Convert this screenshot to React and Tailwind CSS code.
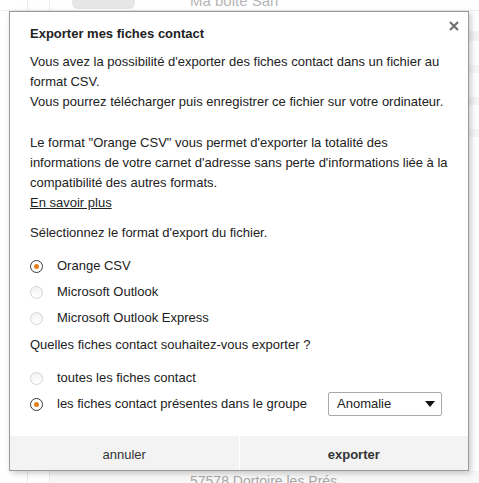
import React from 'react';

const Radio = ({ checked }) =>
    checked ? (
        <span className="w-[13px] h-[13px] rounded-full border-[1.5px] border-[#3a3a3a] bg-white flex items-center justify-center shrink-0">
            <span className="w-[5px] h-[5px] rounded-full bg-[#e67e1c]" />
        </span>
    ) : (
        <span className="w-[13px] h-[13px] rounded-full border border-[#d4d4d4] bg-gradient-to-b from-[#f2f2f2] to-white shrink-0" />
    );

const RadioRow = ({ checked, label, children }) => (
    <div className="flex items-center h-[26px]">
        <Radio checked={checked} />
        <span className="ml-[14px]">{label}</span>
        {children}
    </div>
);

export default function App() {
    return (
        <div className="relative w-[479px] h-[483px] overflow-hidden bg-white text-[13px] text-[#222]" style={{ fontFamily: '"Liberation Sans", Arial, sans-serif' }}>
            {/* page behind the dialog */}
            <div className="flex flex-col h-full">
                <div className="flex h-[11px] border-b border-[#ececec]">
                    <div className="w-[28px] border-r border-[#eee]" />
                    <div className="w-[22px] border-r border-[#eee]" />
                    <div className="ml-[22px] w-[63px] h-[9px] rounded-b-[6px] bg-[#e6e6e6]" />
                    <div className="ml-[55px] -mt-[8px] text-[15px] leading-[18px] text-[#b5b5b5]">Ma boite Sarl</div>
                </div>
                <div className="flex-1 flex flex-col items-end gap-[24px] pt-[20px]">
                    <div className="w-[12px] h-[10px] bg-[#f4f4f4]" />
                    <div className="w-[12px] h-[8px] bg-[#f6f6f6]" />
                    <div className="w-[12px] h-[8px] bg-[#f4f4f4]" />
                    <div className="w-[12px] h-[8px] bg-[#f6f6f6]" />
                </div>
                <div className="flex h-[12px]">
                    <div className="w-[28px] border-r border-[#e8e8e8]" />
                    <div className="w-[22px] border-r border-[#e8e8e8]" />
                    <div className="flex-1 bg-[#f7f7f7] pl-[140px] pt-[1px] text-[14px] leading-[18px] text-[#a8a8a8]">57578 Dortoire les Prés</div>
                </div>
            </div>

            {/* dialog */}
            <div className="absolute left-[9px] top-[11px] w-[460px] h-[460px] bg-white border border-[#9a9a9a] shadow-[2px_2px_6px_rgba(0,0,0,0.22)] flex flex-col">
                <button className="absolute right-[8px] top-[8px] w-[12px] h-[12px] flex items-center justify-center">
                    <svg width="10" height="10" viewBox="0 0 10 10">
                        <path d="M1 1L9 9M9 1L1 9" stroke="#707070" strokeWidth="2.2" />
                    </svg>
                </button>
                <div className="flex-1 px-[20px] pt-[12px] leading-[20px]">
                    <h2 className="font-bold text-[13px] leading-[20px]">Exporter mes fiches contact</h2>
                    <p className="mt-[8px]">
                        Vous avez la possibilité d'exporter des fiches contact dans un fichier au format CSV.
                        <br />
                        Vous pourrez télécharger puis enregistrer ce fichier sur votre ordinateur.
                    </p>
                    <p className="mt-[21px]">
                        Le format "Orange CSV" vous permet d'exporter la totalité des informations de votre carnet d'adresse sans perte d'informations liée à la compatibilité des autres formats.
                        <br />
                        <a className="underline">En savoir plus</a>
                    </p>
                    <p className="mt-[10px]">Sélectionnez le format d'export du fichier.</p>
                    <div className="mt-[10px]">
                        <RadioRow checked label="Orange CSV" />
                        <RadioRow label="Microsoft Outlook" />
                        <RadioRow label="Microsoft Outlook Express" />
                    </div>
                    <p className="mt-[4px]">Quelles fiches contact souhaitez-vous exporter ?</p>
                    <div className="mt-[10px]">
                        <RadioRow label="toutes les fiches contact" />
                        <RadioRow checked label="les fiches contact présentes dans le groupe">
                            <div className="ml-auto mr-[6px] w-[114px] h-[24px] border border-[#a9a9a9] rounded-[2px] flex items-center justify-between pl-[8px] pr-[6px] bg-white">
                                <span>Anomalie</span>
                                <svg width="10" height="6" viewBox="0 0 10 6">
                                    <path d="M0 0H10L5 6Z" fill="#111" />
                                </svg>
                            </div>
                        </RadioRow>
                    </div>
                </div>
                <div className="h-[34px] flex bg-[#f3f3f3]">
                    <button className="flex-1 pt-[3px] text-[#333]">annuler</button>
                    <div className="w-px bg-white" />
                    <button className="flex-1 pt-[3px] font-bold text-[#333]">exporter</button>
                </div>
            </div>
        </div>
    );
}
